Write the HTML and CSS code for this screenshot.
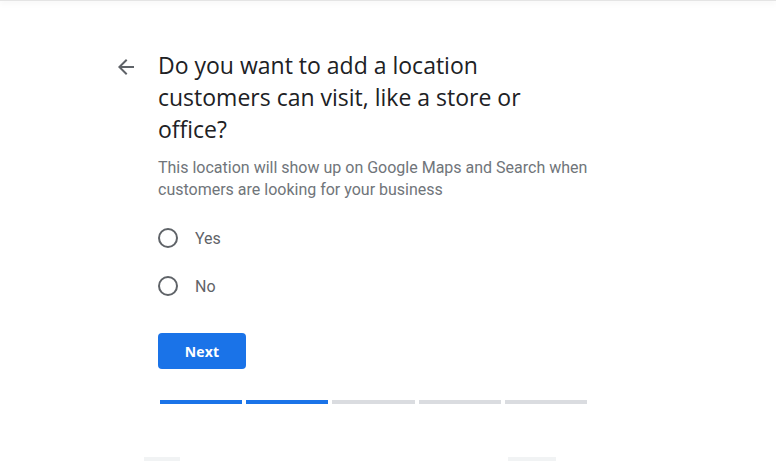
FILE: index.html
```html
<!DOCTYPE html>
<html>
	<head>
		<meta charset="UTF-8">
		<title>Add location</title>
		<link rel="stylesheet" href="styles.css">
	</head>
	<body>
		<!--顶部阴影-->
		<div class="topbar"></div>

		<div class="page">
			<!--返回按钮-->
			<div class="back">
				<svg width="24" height="24" viewBox="0 0 24 24">
					<path d="M20 11H7.83l5.59-5.59L12 4l-8 8 8 8 1.41-1.41L7.83 13H20v-2z" fill="#5f6368"/>
				</svg>
			</div>

			<div class="content">
				<h1 class="title">Do you want to add a location customers can visit, like a store or office?</h1>
				<p class="desc">This location will show up on Google Maps and Search when customers are looking for your business</p>

				<div class="options">
					<label class="option"><span class="radio"></span><span class="label">Yes</span></label>
					<label class="option"><span class="radio"></span><span class="label">No</span></label>
				</div>

				<button class="next">Next</button>

				<!--进度条-->
				<div class="progress">
					<span class="step done"></span>
					<span class="step done"></span>
					<span class="step"></span>
					<span class="step"></span>
					<span class="step"></span>
				</div>
			</div>
		</div>

		<div class="footer">
			<span class="ghost left"></span>
			<span class="ghost right"></span>
		</div>
	</body>
</html>
```

FILE: styles.css
```css
*{
	margin: 0;
	padding: 0;
	box-sizing: border-box;
}

body{
	background-color: #fff;
	font-family: Roboto, "Liberation Sans", sans-serif;
	height: 461px;
	overflow: hidden;
}

/*顶部阴影*/
.topbar{
	height: 1px;
	background-color: #e4e4e4;
	box-shadow: 0 1px 6px rgba(0, 0, 0, 0.18);
}

.page{
	display: flex;
	padding-top: 48px;
	padding-left: 114px;
}

.back{
	width: 44px;
	padding-top: 6px;
}

.back svg{
	display: block;
}

.content{
	width: 432px;
}

.title{
	font-family: "Open Sans", Roboto, sans-serif;
	font-weight: 400;
	font-size: 23px;
	line-height: 32px;
	color: #202124;
	width: 380px;
}

.desc{
	margin-top: 12px;
	font-size: 16px;
	line-height: 22px;
	color: #70757a;
}

.options{
	margin-top: 13px;
}

.option{
	display: flex;
	align-items: center;
	height: 48px;
}

.radio{
	width: 20px;
	height: 20px;
	border: 2px solid #5f6368;
	border-radius: 50%;
}

.label{
	margin-left: 17px;
	font-size: 16px;
	color: #5f6368;
}

.next{
	margin-top: 23px;
	width: 88px;
	height: 36px;
	border: none;
	border-radius: 4px;
	background-color: #1a73e8;
	color: #fff;
	font-family: "Open Sans", Roboto, sans-serif;
	font-weight: 700;
	font-size: 14px;
	letter-spacing: 0.2px;
}

.progress{
	display: flex;
	gap: 4px;
	margin-top: 31px;
	margin-left: 2px;
	width: 427px;
}

.step{
	flex: 1;
	height: 4px;
	background-color: #dadce0;
}

.step.done{
	background-color: #1a73e8;
}

.footer{
	position: relative;
	margin-top: 53px;
	height: 10px;
}

.ghost{
	position: absolute;
	top: 0;
	height: 10px;
	background-color: #f1f3f4;
}

.ghost.left{
	left: 144px;
	width: 36px;
}

.ghost.right{
	left: 508px;
	width: 48px;
}
```
